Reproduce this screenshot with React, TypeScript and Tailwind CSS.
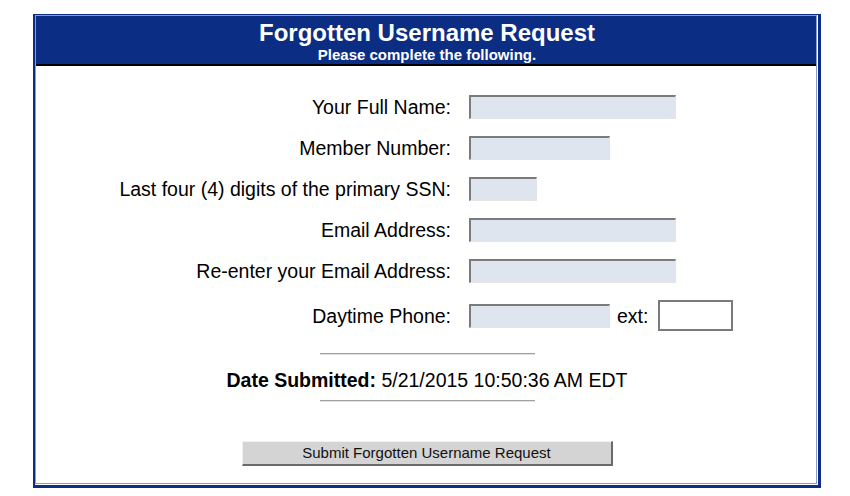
import React from "react"

const fields = [
  { label: "Your Full Name:", width: "w-[207px]" },
  { label: "Member Number:", width: "w-[141px]" },
  { label: "Last four (4) digits of the primary SSN:", width: "w-[68px]" },
  { label: "Email Address:", width: "w-[207px]" },
  { label: "Re-enter your Email Address:", width: "w-[207px]" },
]

function Field({ className }: { className: string }) {
  return (
    <input
      type="text"
      className={`${className} h-[24px] border-t-2 border-l-2 border-b border-r border-t-[#7b7b7b] border-l-[#7b7b7b] border-b-[#e4e4e4] border-r-[#e4e4e4] bg-[#dfe5ef] px-1 text-[15px] outline-none`}
    />
  )
}

function Row({ label, children }: { label: string; children: React.ReactNode }) {
  return (
    <div className="flex items-center">
      <div className="w-[433px] pr-[18px] text-right text-[19.5px] leading-[24px]">{label}</div>
      {children}
    </div>
  )
}

function Rule() {
  return <div className="h-[2px] w-[215px] border-t border-b border-t-[#a0a0a0] border-b-[#e2e2e2]" />
}

export default function App() {
  return (
    <div className="min-h-screen bg-white pl-[33px] pt-[14px] font-['Liberation_Sans',Arial,sans-serif] text-black">
      <div className="w-[788px] border-l-2 border-t border-r-[3px] border-b-[3px] border-[#0b2e84] bg-white pr-px pb-px">
        <div className="border border-[#8a9bd0]">
          <header className="h-[50px] border-b-2 border-black bg-[#0b2d84] pt-[3px] pl-[2px] text-center font-bold text-white">
            <h1 className="text-[24px] leading-[28px]">Forgotten Username Request</h1>
            <p className="text-[15px] leading-[16px]">Please complete the following.</p>
          </header>

          <form className="flex flex-col pt-[29px] pb-[17px]">
            <div className="flex flex-col gap-[17px]">
              {fields.map((f) => (
                <Row key={f.label} label={f.label}>
                  <Field className={f.width} />
                </Row>
              ))}
              <Row label="Daytime Phone:">
                <Field className="w-[141px]" />
                <span className="ml-[7px] text-[19.5px] leading-[24px]">ext:</span>
                <input
                  type="text"
                  className="ml-[10px] h-[31px] w-[75px] border-2 border-[#7a7a7a] bg-white outline-none"
                />
              </Row>
            </div>

            <div className="mt-[22px] flex flex-col items-center pl-[2px]">
              <Rule />
              <p className="mt-[13px] text-[19.5px] leading-[24px]">
                <b>Date Submitted:</b> 5/21/2015 10:50:36 AM EDT
              </p>
              <div className="mt-[8px]">
                <Rule />
              </div>
              <button
                type="button"
                className="mt-[39px] h-[25px] w-[371px] border-t border-l border-r-2 border-b-2 border-t-[#f2f2f2] border-l-[#f2f2f2] border-r-[#6a6a6a] border-b-[#6a6a6a] bg-[#d4d4d4] text-[15px] leading-[20px] text-[#111]"
              >
                Submit Forgotten Username Request
              </button>
            </div>
          </form>
        </div>
      </div>
    </div>
  )
}
